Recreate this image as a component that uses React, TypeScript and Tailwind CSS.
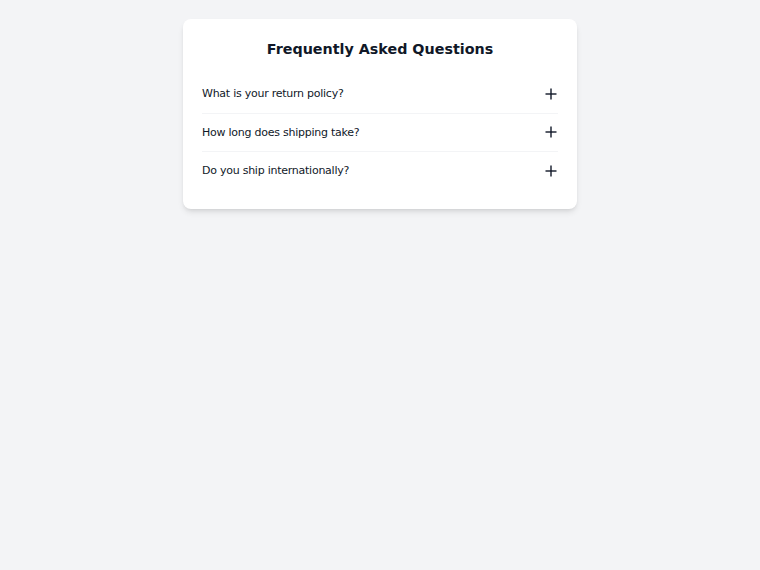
import { useState } from "react";

const faqs = [
  { q: "What is your return policy?", a: "You can return any item within 30 days of delivery for a full refund." },
  { q: "How long does shipping take?", a: "Standard shipping takes 3–5 business days." },
  { q: "Do you ship internationally?", a: "Yes, we ship to most countries worldwide." },
];

function PlusIcon({ open }: { open: boolean }) {
  return (
    <svg width="12" height="12" viewBox="0 0 12 12" fill="none" stroke="currentColor" strokeWidth="1.4">
      <path d="M0.5 6h11" />
      {!open && <path d="M6 0.5v11" />}
    </svg>
  );
}

export default function App() {
  const [open, setOpen] = useState<number | null>(null);

  return (
    <div className="min-h-screen bg-gray-100 pt-[19px] font-['DejaVu_Sans',sans-serif]">
      <div className="mx-auto w-[394px] rounded-lg bg-white px-[19px] pb-[19px] pt-5 shadow-md">
        <h2 className="mb-4 text-center text-[14.3px] font-bold leading-5 text-gray-900">Frequently Asked Questions</h2>
        <div className="divide-y divide-gray-100">
          {faqs.map((f, i) => (
            <div key={f.q}>
              <button
                onClick={() => setOpen(open === i ? null : i)}
                className="flex w-full items-center justify-between py-3 text-left text-[11px] leading-[13.5px] tracking-[-0.25px] text-gray-900"
              >
                <span>{f.q}</span>
                <span className="mr-[1px] text-gray-900">
                  <PlusIcon open={open === i} />
                </span>
              </button>
              {open === i && <p className="pb-3 text-[11px] text-gray-600">{f.a}</p>}
            </div>
          ))}
        </div>
      </div>
    </div>
  );
}
